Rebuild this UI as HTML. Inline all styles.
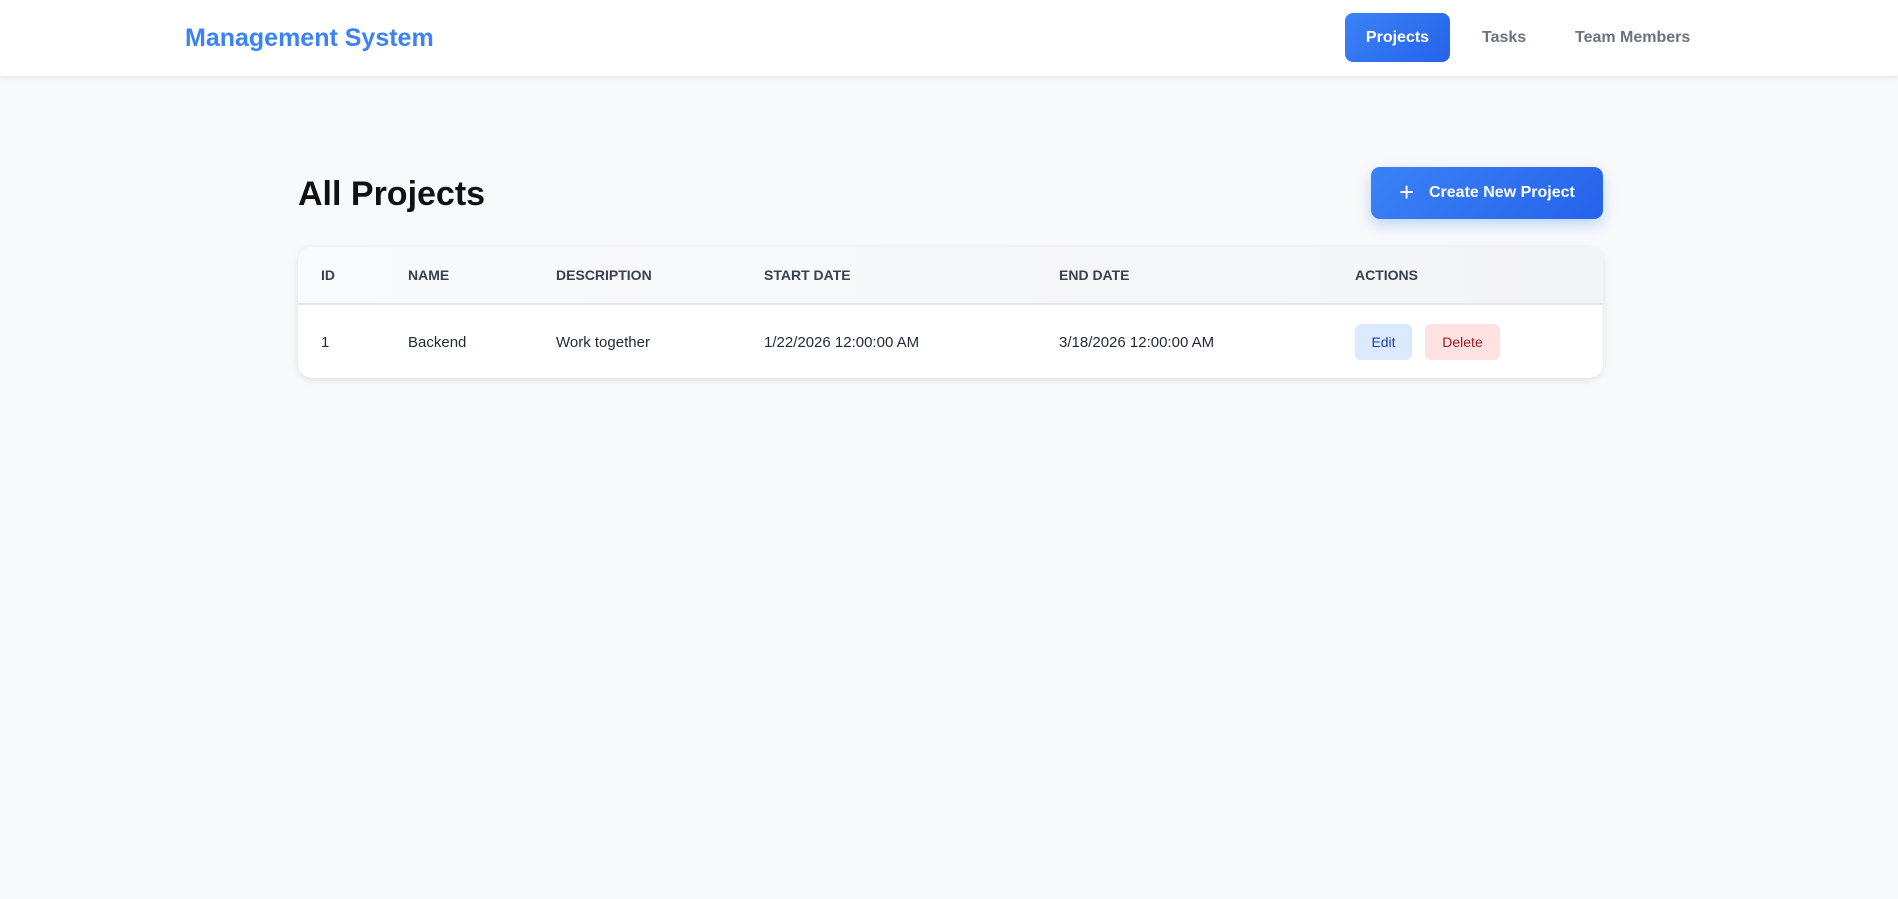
<!DOCTYPE html>
<html><head><style>
*{box-sizing:border-box;margin:0;padding:0}
body{width:1898px;height:899px;background:#f8f9fb;font-family:"Liberation Sans",sans-serif;position:relative;overflow:hidden}
.hdr{position:absolute;left:0;top:0;width:1898px;height:76px;background:#fff;box-shadow:0 2px 4px rgba(0,0,0,.08)}
.logo{position:absolute;left:185px;top:24px;font-size:25px;font-weight:bold;color:#3b82f6}
.nav{position:absolute;top:13px;height:49px;line-height:49px;font-size:16px;font-weight:bold;color:#6b7280}
.act{background:linear-gradient(135deg,#3b82f6,#2563eb);color:#fff;border-radius:8px;text-align:center}
h1{position:absolute;left:298px;top:175px;font-size:34px;font-weight:bold;color:#111}
.cbtn{position:absolute;left:1371px;top:167px;width:232px;height:52px;border-radius:9px;background:linear-gradient(135deg,#3b82f6,#2563eb);color:#fff;font-size:16px;font-weight:bold;line-height:52px;box-shadow:0 6px 14px rgba(59,130,246,.3)}
.tbl{position:absolute;left:298px;top:247px;width:1305px;height:131px;background:#fff;border-radius:14px;box-shadow:0 2px 8px rgba(0,0,0,.1);overflow:hidden}
.th{position:absolute;left:0;top:0;width:100%;height:58px;background:linear-gradient(90deg,#f9fafb,#f3f4f6);border-bottom:2px solid #e5e7eb}
.c{position:absolute;color:#1f2937}
.h{top:20px;font-size:14px;font-weight:bold;color:#374151}
.r{top:87px;font-size:15px}
.b{position:absolute;top:77px;height:36px;line-height:36px;border-radius:6px;font-size:14px;text-align:center}
</style></head><body>
<div class="hdr">
<div class="logo">Management System</div>
<div class="nav act" style="left:1345px;width:105px">Projects</div>
<div class="nav" style="left:1482px">Tasks</div>
<div class="nav" style="left:1575px">Team Members</div>
</div>
<h1>All Projects</h1>
<div class="cbtn"><span style="position:absolute;left:28px;font-size:26px;font-weight:normal;top:-1px">+</span><span style="position:absolute;left:58px">Create New Project</span></div>
<div class="tbl">
<div class="th"></div>
<div class="c h" style="left:23px">ID</div>
<div class="c h" style="left:110px">NAME</div>
<div class="c h" style="left:258px">DESCRIPTION</div>
<div class="c h" style="left:466px">START DATE</div>
<div class="c h" style="left:761px">END DATE</div>
<div class="c h" style="left:1057px">ACTIONS</div>
<div class="c r" style="left:23px">1</div>
<div class="c r" style="left:110px">Backend</div>
<div class="c r" style="left:258px">Work together</div>
<div class="c r" style="left:466px">1/22/2026 12:00:00 AM</div>
<div class="c r" style="left:761px">3/18/2026 12:00:00 AM</div>
<div class="b" style="left:1057px;width:57px;background:#dbeafe;color:#1e40af">Edit</div>
<div class="b" style="left:1127px;width:75px;background:#fee2e2;color:#991b1b">Delete</div>
</div>
</body></html>
